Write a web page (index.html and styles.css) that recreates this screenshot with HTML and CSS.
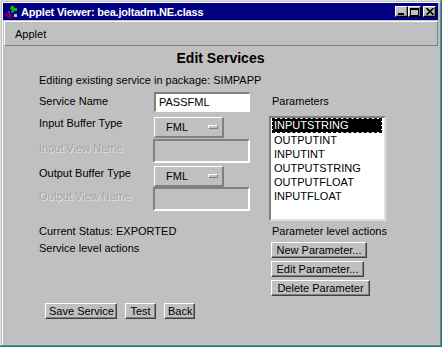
FILE: index.html
```html
<!DOCTYPE html>
<html>
<head>
<meta charset="utf-8">
<title>Applet Viewer</title>
<link rel="stylesheet" href="styles.css">
</head>
<body>
<div class="window">
  <div class="titlebar">
    <svg class="appicon" width="14" height="14" viewBox="0 0 14 14">
      <path d="M1 13 L11 3" stroke="#0000c0" stroke-width="2"/>
      <path d="M2 8 L8 12 M1 10 L6 13" stroke="#d00000" stroke-width="1.2"/>
      <path d="M6 1 L9 1 L9 3 L12 3 L12 6 L9 6 L8 8 L6 7 L7 5 L5 4 Z" fill="#00c000"/>
      <path d="M3 5 L5 7 L4 9 Z" fill="#ff00ff"/>
      <rect x="9" y="9" width="3" height="3" fill="#c0c0c0"/>
    </svg>
    <span class="title">Applet Viewer: bea.joltadm.NE.class</span>
    <div class="wbtns">
      <span class="wbtn"><svg width="9" height="7" viewBox="0 0 9 7"><rect x="1" y="5" width="6" height="2" fill="#000"/></svg></span>
      <span class="wbtn"><svg width="9" height="8" viewBox="0 0 9 8"><path d="M0.5 1.5 H8.5 V7.5 H0.5 Z" fill="none" stroke="#000"/><rect x="0" y="0" width="9" height="2" fill="#000"/></svg></span>
      <span class="wbtn gap"><svg width="8" height="7" viewBox="0 0 8 7"><path d="M0.5 0 L7.5 7 M7.5 0 L0.5 7" stroke="#000" stroke-width="1.6"/></svg></span>
    </div>
  </div>
  <div class="menubar"><span class="menu">Applet</span></div>
  <div class="applet">
    <h1 class="heading">Edit Services</h1>
    <p class="info">Editing existing service in package: SIMPAPP</p>
    <div class="cols">
      <div class="left">
        <div class="row r1"><span class="lbl">Service Name</span><div class="field white">PASSFML</div></div>
        <div class="row r2"><span class="lbl">Input Buffer Type</span><div class="choice"><span>FML</span><i class="ind"></i></div></div>
        <div class="row r3"><span class="lbl disabled">Input View Name</span><div class="field gray"></div></div>
        <div class="row r4"><span class="lbl">Output Buffer Type</span><div class="choice"><span>FML</span><i class="ind"></i></div></div>
        <div class="row r5"><span class="lbl disabled">Output View Name</span><div class="field gray"></div></div>
        <div class="status">Current Status: EXPORTED</div>
        <div class="svcact">Service level actions</div>
      </div>
      <div class="right">
        <div class="plabel">Parameters</div>
        <div class="listbox">
          <div class="item sel">INPUTSTRING</div>
          <div class="item">OUTPUTINT</div>
          <div class="item">INPUTINT</div>
          <div class="item">OUTPUTSTRING</div>
          <div class="item">OUTPUTFLOAT</div>
          <div class="item">INPUTFLOAT</div>
        </div>
        <div class="plabel2">Parameter level actions</div>
        <div class="pbtns">
          <button class="btn w-new">New Parameter...</button>
          <button class="btn w-edit">Edit Parameter...</button>
          <button class="btn w-del">Delete Parameter</button>
        </div>
      </div>
    </div>
    <div class="bottom">
      <button class="btn w-save">Save Service</button>
      <button class="btn w-test">Test</button>
      <button class="btn w-back">Back</button>
    </div>
  </div>
</div>
</body>
</html>
```

FILE: styles.css
```css
* { box-sizing: border-box; }
html, body { margin: 0; padding: 0; }
body {
  width: 442px;
  height: 347px;
  overflow: hidden;
  background: #008080;
  font-family: "Liberation Sans", Arial, sans-serif;
  font-size: 11px;
  line-height: 14px;
  color: #000;
}
.window {
  width: 441px;
  height: 346px;
  background: #c0c0c0;
  border: 1px solid;
  border-color: #dfdfdf #808080 #808080 #dfdfdf;
  box-shadow: inset 1px 1px 0 #c0c0c0, inset 2px 2px 0 #fff;
  padding: 2px 2px 0 2px;
  display: flex;
  flex-direction: column;
}
.titlebar {
  height: 17px;
  background: #000080;
  display: flex;
  align-items: center;
  padding: 0 2px;
  color: #fff;
}
.appicon { flex: none; }
.title {
  margin-left: 2px;
  font-weight: bold;
  font-size: 11px;
  letter-spacing: -0.2px;
  white-space: nowrap;
}
.wbtns { margin-left: auto; display: flex; }
.wbtn {
  width: 13px;
  height: 11px;
  background: #c0c0c0;
  border-top: 1px solid #fff;
  border-left: 1px solid #fff;
  border-right: 1px solid #000;
  border-bottom: 1px solid #000;
  box-shadow: inset -1px -1px 0 #808080;
  display: flex;
  align-items: center;
  justify-content: center;
}
.wbtn.gap { margin-left: 2px; }
.menubar {
  margin: 1px 0 0 1px;
  height: 25px;
  border: 1px solid;
  border-color: #fff #808080 #808080 #fff;
  display: flex;
  align-items: center;
  padding-left: 10px;
}
.menu { font-size: 11px; }
.applet {
  flex: 1;
  padding: 4px 0 0 36px;
}
.heading {
  margin: 0 0 0 -36px;
  font-size: 14px;
  line-height: 16px;
  font-weight: bold;
  text-align: center;
}
.info { margin: 7px 0 0; white-space: nowrap; }
.cols { display: flex; align-items: flex-start; margin-top: 5px; }
.left { width: 230px; flex: none; }
.row { display: flex; align-items: flex-start; }
.lbl { width: 115px; flex: none; white-space: nowrap; }
.disabled { color: #a4a4a4; text-shadow: 1px 1px 0 #e4e4e4; }
.r1 .lbl { margin-top: 2px; }
.r2 { margin-top: 4px; }
.r2 .choice { margin-top: 1px; }
.r3 { margin-top: 1px; }
.r3 .lbl, .r5 .lbl { margin-top: 2px; }
.r4 { margin-top: 3px; }
.field {
  border-top: 2px solid #808080;
  border-left: 2px solid #808080;
  border-right: 1px solid #fff;
  border-bottom: 1px solid #fff;
}
.field.white {
  width: 96px;
  height: 20px;
  background: #fff;
  padding-left: 3px;
  line-height: 17px;
}
.field.gray {
  width: 97px;
  height: 24px;
  margin-left: -1px;
  border-right-width: 2px;
  border-bottom-width: 2px;
}
.choice {
  width: 70px;
  height: 21px;
  border-top: 1px solid #fff;
  border-left: 1px solid #fff;
  border-right: 2px solid #808080;
  border-bottom: 2px solid #808080;
  display: flex;
  align-items: center;
  padding-left: 11px;
}
.ind {
  margin-left: auto;
  margin-right: 4px;
  width: 10px;
  height: 4px;
  border-top: 1px solid #fff;
  border-left: 1px solid #fff;
  border-right: 1px solid #808080;
  border-bottom: 1px solid #808080;
}
.status { margin-top: 13px; }
.svcact { margin-top: 3px; }
.right { flex: none; }
.plabel { margin-top: 2px; padding-left: 3px; }
.listbox {
  margin-top: 8px;
  width: 117px;
  height: 105px;
  background: #fff;
  border-top: 2px solid #808080;
  border-left: 2px solid #808080;
  border-right: 2px solid #dfdfdf;
  border-bottom: 2px solid #dfdfdf;
  padding: 0 1px 0 1px;
}
.item {
  height: 14px;
  line-height: 14px;
  padding-left: 2px;
  white-space: nowrap;
}
.item.sel {
  background: #000;
  background-clip: padding-box;
  color: #fff;
  border: 1px dashed #000;
  height: 15px;
  line-height: 13px;
  padding-left: 1px;
  margin-right: 1px;
}
.plabel2 { margin-top: 3px; padding-left: 3px; }
.pbtns {
  margin: 4px 0 0 2px;
  display: flex;
  flex-direction: column;
  align-items: flex-start;
  gap: 3px;
}
.btn {
  font-family: inherit;
  font-size: 11px;
  line-height: 13px;
  color: #000;
  height: 16px;
  padding: 0 3px;
  background: #c0c0c0;
  border-top: 1px solid #fff;
  border-left: 1px solid #fff;
  border-right: 1px solid #404040;
  border-bottom: 1px solid #404040;
  box-shadow: inset -1px -1px 0 #808080;
  white-space: nowrap;
}
.w-new { width: 96px; }
.w-edit { width: 93px; }
.w-del { width: 99px; }
.w-save { width: 72px; }
.w-test { width: 31px; }
.w-back { width: 31px; }
.bottom {
  margin: 7px 0 0 6px;
  display: flex;
  gap: 8px;
}
```
